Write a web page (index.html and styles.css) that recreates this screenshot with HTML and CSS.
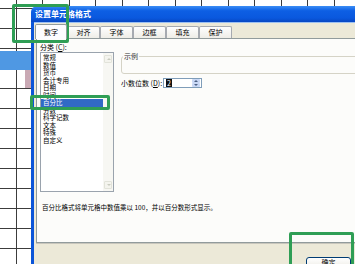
FILE: index.html
```html
<!DOCTYPE html>
<html lang="zh-CN">
<head>
  <meta charset="UTF-8" />
  <title>设置单元格格式</title>
  <link rel="stylesheet" href="styles.css">
</head>
<body>

  <div class="dialog">
    <div class="titlebar">设置单元格格式</div>

    <div class="frame">
      <div class="tabs">
        <span class="tab active">数字</span>
        <span class="tab">对齐</span>
        <span class="tab">字体</span>
        <span class="tab">边框</span>
        <span class="tab">填充</span>
        <span class="tab">保护</span>
      </div>

      <div class="panel">
        <div class="columns">
          <div class="category">
            <div class="label">分类 (<u>C</u>):</div>
            <div class="listbox">
              <ul class="items">
                <li>常规</li>
                <li>数值</li>
                <li>货币</li>
                <li>会计专用</li>
                <li>日期</li>
                <li>时间</li>
                <li class="selected">百分比</li>
                <li>分数</li>
                <li>科学记数</li>
                <li>文本</li>
                <li>特殊</li>
                <li>自定义</li>
              </ul>
              <div class="scrollbar">
                <span class="arrow up"></span>
                <span class="arrow down"></span>
              </div>
            </div>
          </div>

          <div class="options">
            <fieldset class="sample">
              <legend>示例</legend>
            </fieldset>
            <div class="decimals">
              <span>小数位数 (<u>D</u>):</span>
              <div class="spin">
                <span class="value">2</span>
                <div class="spin-buttons">
                  <span class="spin-up"></span>
                  <span class="spin-down"></span>
                </div>
              </div>
            </div>
          </div>
        </div>

        <p class="description">百分比格式将单元格中数值乘以 100，并以百分数形式显示。</p>
      </div>

      <div class="footer">
        <button class="ok">确定</button>
      </div>
    </div>
  </div>

  <!-- green annotation marks drawn over the screenshot -->
  <div class="mark mark-tab"></div>
  <div class="mark mark-item"></div>
  <div class="mark mark-ok"></div>

</body>
</html>
```

FILE: styles.css
```css
* {
  box-sizing: border-box;
}

html, body {
  margin: 0;
  overflow: hidden;
}

body {
  position: relative;
  width: 355px;
  height: 264px;
  font-family: "Noto Sans CJK SC", "Noto Sans", sans-serif;
  font-size: 7px;
  color: #000;
  background-color: #fff;
  /* spreadsheet behind the dialog */
  background-image:
    linear-gradient(#c9a9b4, #c9a9b4),
    linear-gradient(#4f98e3, #4f98e3),
    repeating-linear-gradient(to bottom, transparent 0 8px, #3c3c3c 8px 9px, transparent 9px 20px),
    repeating-linear-gradient(to right, transparent 0 16px, #3c3c3c 16px 17px, transparent 17px 26.5px);
  background-size: 7px 18px, 31px 19px, auto, auto;
  background-position: 25px 70px, 0 51px, 0 0, 0 0;
  background-repeat: no-repeat, no-repeat, repeat, repeat;
}

.dialog {
  width: 344px;
  height: 270px;
  margin: 6px 0 0 31px;
  display: flex;
  flex-direction: column;
}

.titlebar {
  height: 16px;
  padding-left: 4px;
  line-height: 16px;
  font-size: 8px;
  font-weight: 700;
  color: #fff;
  background: linear-gradient(#3b8df5, #0d5fe4 30%, #0a58de 75%, #0847c2);
  border-top-left-radius: 6px;
}

.frame {
  flex: 1;
  display: flex;
  flex-direction: column;
  background-color: #ece9d8;
  border-left: 3px solid #0b55d8;
  box-shadow: inset 0 1px #9cc0f2;
}

.tabs {
  height: 16px;
  padding-left: 1px;
  display: flex;
  align-items: flex-end;
}

.tab {
  width: 33px;
  height: 12px;
  line-height: 11px;
  text-align: center;
  border: 1px solid #a6aab0;
  border-bottom: none;
  border-radius: 2px 2px 0 0;
  background: linear-gradient(#fefefe, #eeede7);
}

.tab.active {
  width: 32px;
  height: 15px;
  line-height: 14px;
  margin-bottom: -1px;
  background: #fcfcfe;
  border-color: #919b9c;
  position: relative;
  z-index: 1;
}

.panel {
  height: 205px;
  margin-left: 2px;
  padding: 4px 0 0 3px;
  background-color: #fcfcfa;
  border: 1px solid #919b9c;
  border-right: none;
  box-shadow: 0 1px #c8c6bc;
}

.columns {
  display: flex;
  gap: 7px;
}

.category {
  width: 74px;
}

.label {
  height: 8px;
  line-height: 8px;
}

.listbox {
  height: 140px;
  margin-top: 1px;
  display: flex;
  border: 1px solid #9aa3ad;
  background-color: #fff;
}

.items {
  flex: 1;
  margin: 0;
  padding: 1px 0 0 0;
  list-style: none;
  font-size: 6.5px;
}

.items li {
  height: 7.5px;
  line-height: 7.5px;
  padding-left: 2px;
  white-space: nowrap;
}

.items li.selected {
  background-color: #316ac5;
  color: #fff;
}

.scrollbar {
  width: 10px;
  display: flex;
  flex-direction: column;
  justify-content: space-between;
  padding: 2px 1px;
  background-color: #f7f7f3;
}

.arrow {
  height: 8px;
  border: 1px solid #e2e3da;
  border-radius: 1px;
  background-color: #f4f4ee;
  position: relative;
}

.arrow::after {
  content: "";
  position: absolute;
  left: 2px;
  top: 2px;
  border-left: 2px solid transparent;
  border-right: 2px solid transparent;
}

.arrow.up::after {
  border-bottom: 2px solid #c9cbc0;
}

.arrow.down::after {
  border-top: 2px solid #c9cbc0;
}

.options {
  flex: 1;
}

.sample {
  height: 22px;
  margin: 9px 0 0 0;
  padding: 0;
  border: 1px solid #d5d3c6;
  border-radius: 3px;
}

.sample legend {
  margin-left: 1px;
  padding: 0 1px;
  line-height: 8px;
  color: #333;
}

.decimals {
  margin-top: 4px;
  display: flex;
  align-items: center;
  gap: 1px;
}

.spin {
  width: 39px;
  height: 10px;
  display: flex;
  align-items: center;
  justify-content: space-between;
  padding: 0 1px 0 2px;
  border: 1px solid #7f9db9;
  background-color: #fff;
}

.value {
  height: 8px;
  line-height: 8px;
  padding: 0 1px;
  background-color: #111;
  color: #fff;
}

.spin-buttons {
  width: 8px;
  height: 8px;
  display: flex;
  flex-direction: column;
}

.spin-up,
.spin-down {
  flex: 1;
  position: relative;
  background-color: #c9d8f6;
  border-radius: 1px;
}

.spin-up::after,
.spin-down::after {
  content: "";
  position: absolute;
  left: 2px;
  top: 1px;
  border-left: 2px solid transparent;
  border-right: 2px solid transparent;
}

.spin-up::after {
  border-bottom: 2px solid #4d6185;
}

.spin-down::after {
  border-top: 2px solid #4d6185;
}

.description {
  margin: 11px 0 0 2px;
  line-height: 8px;
  font-size: 6.5px;
  white-space: nowrap;
}

.footer {
  flex: 1;
  display: flex;
  justify-content: flex-end;
  padding: 14px 24px 0 0;
}

.ok {
  width: 45px;
  height: 11px;
  padding: 0;
  font-family: inherit;
  font-size: 7px;
  line-height: 9px;
  color: #000;
  border: 1px solid #003c74;
  border-radius: 3px;
  background: linear-gradient(#fff, #f2f1ec 80%, #d8d4c8);
}

.mark {
  position: absolute;
  border: 3px solid #2f9e55;
  border-radius: 2px;
}

.mark-tab {
  left: 12px;
  top: 4px;
  width: 57px;
  height: 39px;
}

.mark-item {
  left: 30px;
  top: 95px;
  width: 80px;
  height: 15px;
}

.mark-ok {
  left: 289px;
  top: 232px;
  width: 65px;
  height: 36px;
}
```
